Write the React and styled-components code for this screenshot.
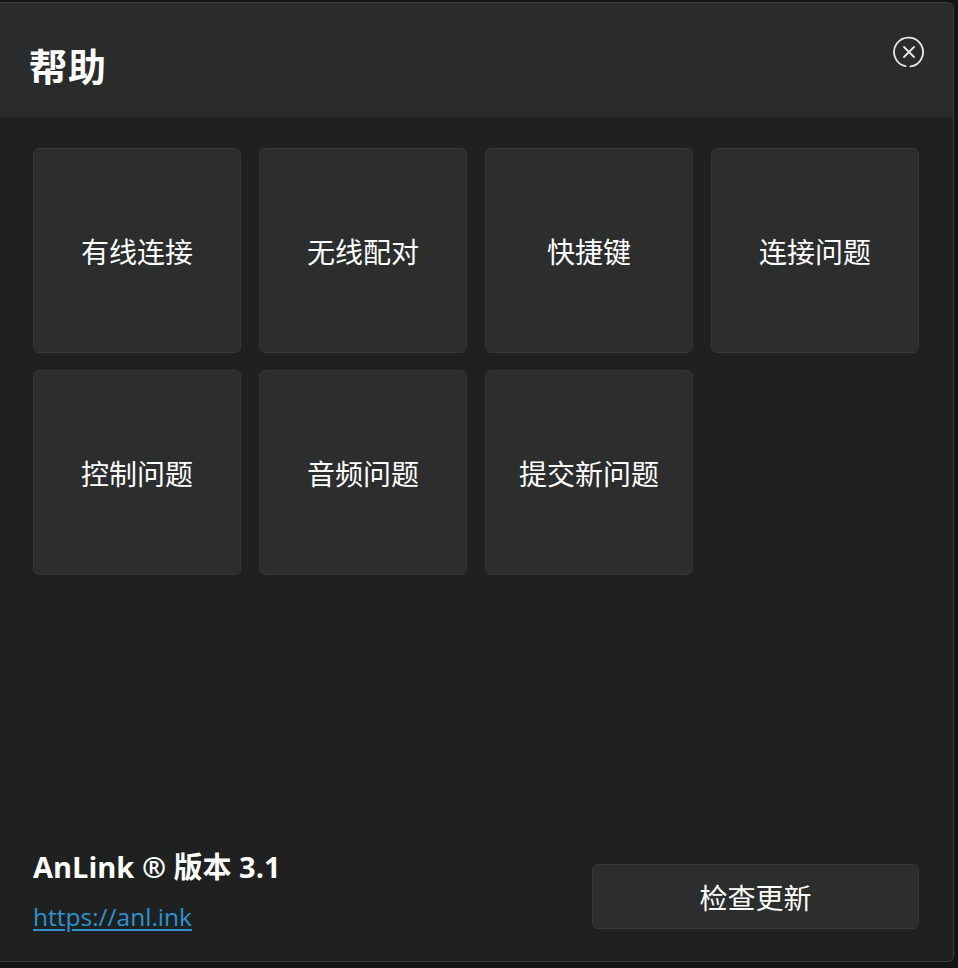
import styled, { createGlobalStyle } from 'styled-components';

const GlobalStyle = createGlobalStyle`
  html, body {
    margin: 0;
    padding: 0;
    background: #141414;
  }
  body {
    font-family: "Noto Sans", "Noto Sans CJK SC", sans-serif;
  }
`;

const Window = styled.div`
  box-sizing: border-box;
  width: 954px;
  height: 960px;
  margin-top: 2px;
  display: flex;
  flex-direction: column;
  background: #1f2020;
  border: 1px solid #3a3b3b;
  border-left: none;
  border-radius: 0 6px 6px 0;
  overflow: hidden;
  color: #fff;
`;

const Header = styled.div`
  height: 114px;
  flex-shrink: 0;
  display: flex;
  align-items: flex-start;
  justify-content: space-between;
  padding: 0 26px 0 29px;
  background: #2a2b2b;
`;

const Title = styled.h1`
  margin: 34px 0 0;
  font-family: "Noto Sans CJK SC", sans-serif;
  font-size: 38px;
  font-weight: 700;
  line-height: 56px;
  letter-spacing: 1px;
`;

const CloseButton = styled.button`
  margin-top: 31px;
  width: 36px;
  height: 36px;
  padding: 0;
  border: none;
  background: transparent;
  color: #e8e8e8;
  cursor: pointer;
  display: flex;
  align-items: center;
  justify-content: center;
`;

const Body = styled.div`
  flex: 1;
  display: flex;
  flex-direction: column;
  padding: 31px 34px 31px 33px;
`;

const TileGrid = styled.div`
  display: grid;
  grid-template-columns: repeat(4, 208px);
  grid-auto-rows: 205px;
  gap: 17px 18px;
`;

const Tile = styled.button`
  box-sizing: border-box;
  border: 1px solid #353636;
  border-radius: 6px;
  background: #2c2d2d;
  color: #fff;
  font-family: "Noto Sans CJK SC", sans-serif;
  font-size: 28px;
  font-weight: 400;
  cursor: pointer;
  display: flex;
  align-items: center;
  justify-content: center;
  padding: 0;
`;

const Footer = styled.div`
  margin-top: auto;
  display: flex;
  align-items: flex-end;
  justify-content: space-between;
`;

const Info = styled.div`
  display: flex;
  flex-direction: column;
  gap: 14px;
  margin-bottom: -4px;
`;

const Version = styled.div`
  font-family: "Open Sans", "Noto Sans CJK SC", sans-serif;
  font-size: 29px;
  font-weight: 700;
  line-height: 38px;
`;

const Link = styled.a`
  font-family: "Open Sans", sans-serif;
  font-size: 24.5px;
  line-height: 34px;
  color: #2f93cf;
  text-decoration: underline;
  text-underline-offset: 3px;
`;

const UpdateButton = styled.button`
  box-sizing: border-box;
  width: 327px;
  height: 65px;
  margin-bottom: 1px;
  border: 1px solid #363737;
  border-radius: 6px;
  background: #2c2d2d;
  color: #fff;
  font-family: "Noto Sans CJK SC", sans-serif;
  font-size: 28px;
  cursor: pointer;
`;

const topics = [
  '有线连接',
  '无线配对',
  '快捷键',
  '连接问题',
  '控制问题',
  '音频问题',
  '提交新问题',
];

const CloseIcon = () => (
  <svg width="34" height="34" viewBox="0 0 34 34" fill="none" stroke="currentColor" strokeWidth="1.8" strokeLinecap="round">
    <path d="M13.5 31.2 A14.5 14.5 0 1 1 18.5 31.4" />
    <path d="M12 12 L22 22 M22 12 L12 22" />
  </svg>
);

export default function App() {
  return (
    <>
      <GlobalStyle />
      <Window>
        <Header>
          <Title>帮助</Title>
          <CloseButton aria-label="关闭">
            <CloseIcon />
          </CloseButton>
        </Header>
        <Body>
          <TileGrid>
            {topics.map((t) => (
              <Tile key={t}>{t}</Tile>
            ))}
          </TileGrid>
          <Footer>
            <Info>
              <Version>AnLink ® 版本 3.1</Version>
              <Link href="#">https://anl.ink</Link>
            </Info>
            <UpdateButton>检查更新</UpdateButton>
          </Footer>
        </Body>
      </Window>
    </>
  );
}
